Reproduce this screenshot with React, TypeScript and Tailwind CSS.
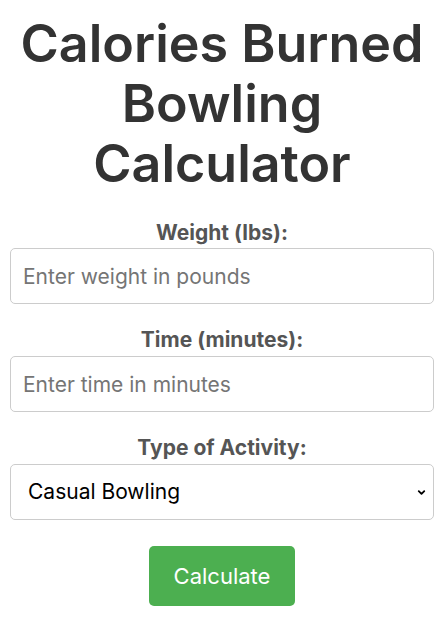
import { ChevronDown } from 'lucide-react';

export default function App() {
  return (
    <div className="min-h-screen bg-white pl-[10px] pr-[13px] pt-[14px] text-center font-['Inter',sans-serif]">
      <h1 className="mb-[25px] text-[52px] font-semibold leading-[60px] text-[#333]">
        Calories Burned Bowling Calculator
      </h1>

      <form className="flex flex-col">
        <label className="mb-[2px] block text-[21px] font-bold leading-[27px] text-[#555]">
          Weight (lbs):
        </label>
        <input
          type="text"
          placeholder="Enter weight in pounds"
          className="mb-[22px] h-[56px] w-full rounded-[5px] border border-[#ccc] px-[12px] text-[21px] text-black outline-none placeholder:text-[#757575]"
        />

        <label className="mb-[3px] block text-[21px] font-bold leading-[27px] text-[#555]">
          Time (minutes):
        </label>
        <input
          type="text"
          placeholder="Enter time in minutes"
          className="mb-[22px] h-[56px] w-full rounded-[5px] border border-[#ccc] px-[12px] text-[21px] text-black outline-none placeholder:text-[#757575]"
        />

        <label className="mb-[3px] block text-[21px] font-bold leading-[27px] text-[#555]">
          Type of Activity:
        </label>
        <div className="relative mb-[26px]">
          <select className="h-[56px] w-full appearance-none rounded-[5px] border border-[#ccc] bg-white px-[17px] text-[21px] text-black outline-none">
            <option>Casual Bowling</option>
            <option>Competitive Bowling</option>
          </select>
          <ChevronDown
            className="pointer-events-none absolute right-[7px] top-[23px] h-[11px] w-[11px] text-black"
            strokeWidth={4}
          />
        </div>

        <div>
          <button
            type="button"
            className="h-[60px] w-[146px] rounded-[5px] bg-[#4caf50] text-[22px] text-white"
          >
            Calculate
          </button>
        </div>
      </form>
    </div>
  );
}
